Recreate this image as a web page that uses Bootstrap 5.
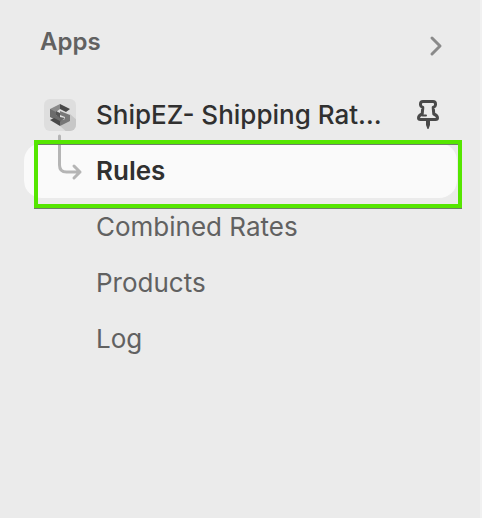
<!DOCTYPE html>
<html lang="en">
<head>
<meta charset="utf-8">
<meta name="viewport" content="width=device-width, initial-scale=1">
<title>Apps</title>
<link href="https://cdn.jsdelivr.net/npm/bootstrap@5.3.0/dist/css/bootstrap.min.css" rel="stylesheet">
<style>
  body { background: #ebebeb; font-family: Inter, sans-serif; }
  .sidebar { padding: 16px 23px 0 24px; border-right: 2px solid #f1f1f1; }
  .section-toggle { height: 52px; padding: 0 13px 0 16px; font-size: 24px; line-height: 32px; font-weight: 600; color: #616161; }
  .section-toggle svg { margin-top: 8px; }
  .app-list { margin-top: 19px; }
  .app-row, .app-list .nav-link { height: 56px; font-size: 26px; line-height: 32px; }
  .app-row { padding: 0 17px 0 20px; }
  .app-name { margin-left: 20px; font-weight: 500; color: #303030; }
  .app-list .nav-link { padding: 0 24px 0 72px; color: #616161; border-radius: 18px; }
  .app-list .nav-link.active { background: #fafafa; color: #303030; font-weight: 600; border-bottom: 1px solid #ebebeb; }
  .branch { left: 32px; top: -10px; }
  .highlight { inset: -3px -5px -9px 10px; border: 4px solid #55e600; box-shadow: 0 1px 0 #6d7f68, inset 0 1px 0 #6d7f68; pointer-events: none; }
</style>
<script src="https://cdn.jsdelivr.net/npm/bootstrap@5.3.0/dist/js/bootstrap.bundle.min.js" defer></script>
</head>
<body>
<aside class="sidebar min-vh-100">
  <button type="button" class="section-toggle btn border-0 w-100 d-flex align-items-center justify-content-between">
    <span>Apps</span>
    <svg width="16" height="22" viewBox="0 0 16 22" fill="none" stroke="#8a8a8a" stroke-width="3" stroke-linecap="round" stroke-linejoin="round" aria-hidden="true"><path d="M4 3l8 8-8 8"/></svg>
  </button>
  <nav class="app-list" aria-label="Apps">
    <div class="app-row d-flex align-items-center">
      <a href="#" class="d-flex align-items-center flex-grow-1 text-decoration-none">
        <svg width="32" height="32" viewBox="0 0 32 32" aria-hidden="true">
          <clipPath id="tile"><rect width="32" height="32" rx="6"/></clipPath>
          <g clip-path="url(#tile)">
            <path fill="#dedede" d="M0 0h32v32H0z"/>
            <path fill="#c7c7c7" d="M26 15l8 7v12H24l-8-7z"/>
            <path fill="#8b8b8b" d="M16 5v5l-4 3v5l-6-1v-7z"/>
            <path fill="#484848" d="M16 5l10 5-4 3-6-3z"/>
            <path fill="#6c6c6c" d="M6 10l6 3v3l4 2v5L6 18z"/>
            <path fill="#777" d="M16 12l10 4v6l-10 5v-5l5-2v-2l-5-2z"/>
            <path fill="#555" d="M12 12l4 2v5l-4-3z"/>
            <path fill="#666" d="M16 18l5 1-5 4z"/>
            <path fill="#484848" d="M6 21l4-2 6 3v5z"/>
          </g>
        </svg>
        <span class="app-name text-nowrap">ShipEZ- Shipping Rat…</span>
      </a>
      <button type="button" class="btn border-0 p-0 d-flex" aria-label="Pin app">
        <svg width="24" height="32" viewBox="0 0 24 32" fill="none" stroke="#4a4a4a" stroke-width="3" stroke-linecap="round" stroke-linejoin="round" aria-hidden="true">
          <path d="M7 2.500h10q2.500 0 2.500 2.500v1q0 1.500-2.300 2.500l.6 6.500q3.700 1.500 3.700 4 0 1.500-2 1.500h-15q-2 0-2-1.500 0-2.500 3.700-4l.6-6.500Q4.500 7.500 4.500 6V5Q4.500 2.500 7 2.500z"/>
          <path d="M6.500 16.500H10" stroke-width="2"/>
          <path d="M10 21h4v5l-1.500 4h-1L10 26z" fill="#4a4a4a" stroke="none"/>
        </svg>
      </button>
    </div>
    <div class="nav flex-column flex-nowrap">
      <div class="position-relative">
        <a href="#" class="nav-link active d-flex align-items-center" aria-current="page">Rules</a>
        <svg class="branch position-absolute" width="28" height="50" viewBox="0 0 28 50" fill="none" stroke="#b5b5b5" stroke-width="3" stroke-linecap="round" stroke-linejoin="round" aria-hidden="true"><path d="M3.500 3v29q0 7 7 7H24M18 33l6 6-6 6"/></svg>
        <div class="highlight position-absolute"></div>
      </div>
      <a href="#" class="nav-link d-flex align-items-center">Combined Rates</a>
      <a href="#" class="nav-link d-flex align-items-center">Products</a>
      <a href="#" class="nav-link d-flex align-items-center">Log</a>
    </div>
  </nav>
</aside>
</body>
</html>
